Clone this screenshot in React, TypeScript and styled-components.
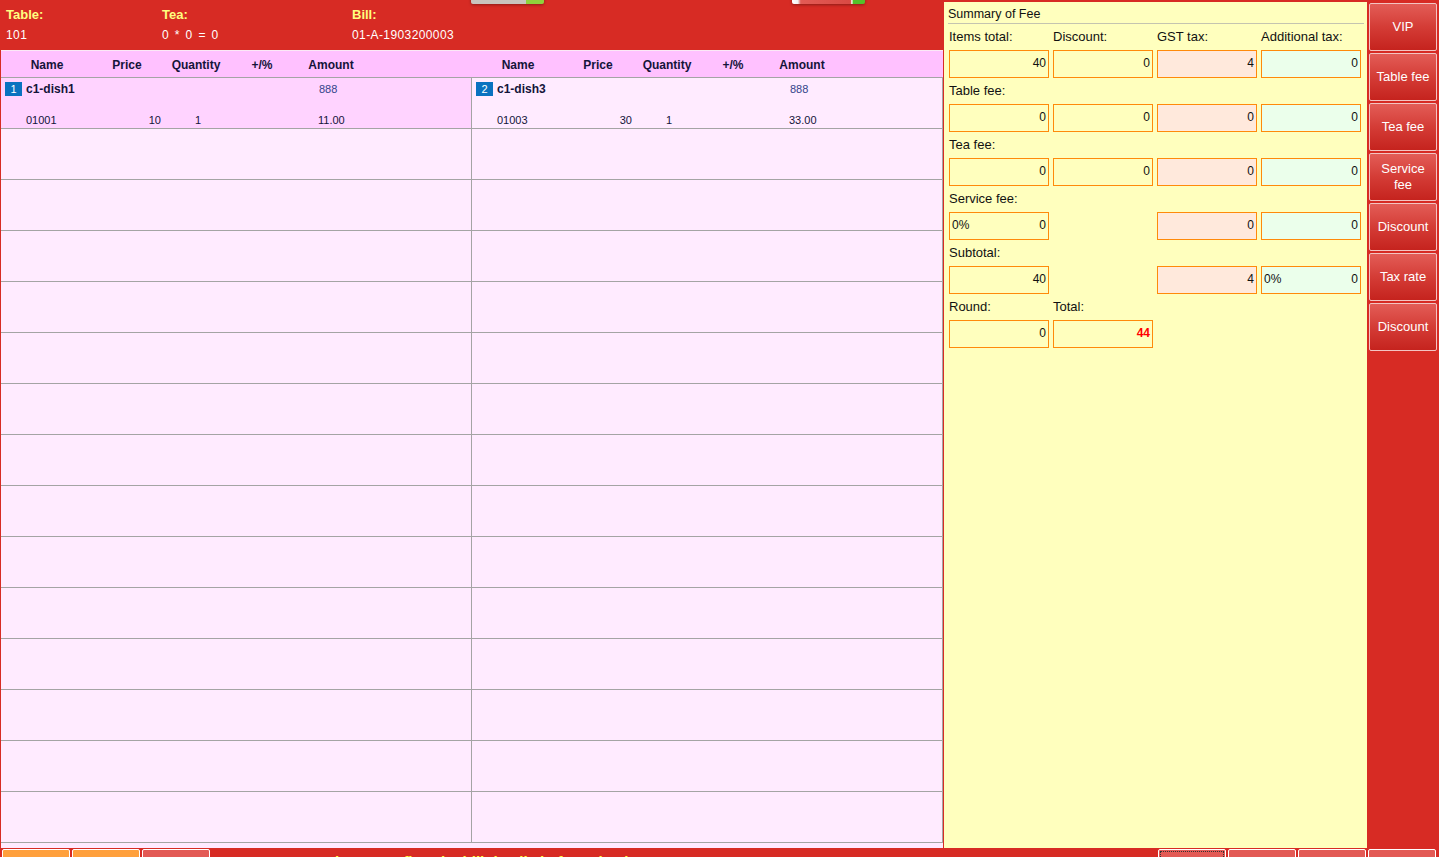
import React from "react";
import styled, { createGlobalStyle, css } from "styled-components";

const GlobalStyle = createGlobalStyle`
  html, body { margin: 0; padding: 0; background: #d72b24; }
  body { font-family: "Liberation Sans", Arial, sans-serif; }
  * { box-sizing: border-box; }
`;

const Page = styled.div`
  position: relative;
  width: 1439px;
  height: 857px;
  overflow: hidden;
  background: #d72b24;
  display: grid;
  grid-template-columns: 943px 424px 72px;
  grid-template-rows: 848px 9px;
`;

const LeftArea = styled.div`
  display: flex;
  flex-direction: column;
  min-height: 0;
`;

const InfoBar = styled.div`
  height: 50px;
  display: grid;
  grid-template-columns: 156px 190px 1fr;
  padding: 7px 0 0 6px;
`;

const InfoItem = styled.div`
  display: flex;
  flex-direction: column;
  gap: 6px;
`;

const InfoLabel = styled.div`
  color: #ffff80;
  font-weight: bold;
  font-size: 13px;
  line-height: 15px;
`;

const InfoValue = styled.div`
  color: #ffffff;
  font-size: 12px;
  line-height: 15px;
  letter-spacing: 0.4px;
  word-spacing: 2px;
`;

const Thumb = styled.div<{ $left: number; $tone: "grey" | "red" }>`
  position: absolute;
  top: -38px;
  left: ${(p) => p.$left}px;
  width: 73px;
  height: 42px;
  border-radius: 2px;
  box-shadow: 0 1px 3px rgba(0, 0, 0, 0.35);
  ${(p) =>
    p.$tone === "grey"
      ? css`
          background: linear-gradient(90deg, #c9c4be 0%, #c9c4be 76%, #8fd23c 76%, #8fd23c 100%);
        `
      : css`
          background: linear-gradient(90deg, #ffffff 0%, #f2f2f2 8%, #e25b55 12%, #d94a44 80%, #ffffff 82%, #54c02a 84%, #54c02a 100%);
        `}
`;

const OrderGrid = styled.div`
  flex: 1;
  margin-left: 1px;
  width: 942px;
  border-top: 1px solid #fbe8f6;
  background: #ffeaff;
  display: flex;
  flex-direction: column;
`;

const HeaderRow = styled.div`
  height: 27px;
  display: flex;
  background: #ffc1ff;
  border-bottom: 1px solid #a4a4a4;
  padding-top: 2px;
`;

const HeaderHalf = styled.div`
  width: 471px;
  display: flex;
  align-items: center;
`;

const HeaderCell = styled.div<{ $w: number }>`
  width: ${(p) => p.$w}px;
  text-align: center;
  font-size: 12px;
  font-weight: bold;
  color: #14143a;
`;

const Body = styled.div`
  display: grid;
  grid-template-columns: 471px 471px;
`;

const Cell = styled.div<{ $selected?: boolean }>`
  height: 51px;
  background: ${(p) => (p.$selected ? "#ffd3ff" : "#ffebff")};
  border-bottom: 1px solid #a4a4a4;
  border-right: 1px solid #a4a4a4;
  display: flex;
  flex-direction: column;
  justify-content: space-between;
  padding: 3px 0 1px 0;
  color: #14143a;
`;

const LineTop = styled.div`
  display: grid;
  grid-template-columns: 25px 293px 1fr;
  align-items: center;
  height: 15px;
`;

const LineBottom = styled.div`
  display: grid;
  grid-template-columns: 25px 95px 40px 34px 123px 1fr;
  align-items: center;
  height: 15px;
  font-size: 11px;
`;

const Badge = styled.div`
  margin-left: 4px;
  width: 17px;
  height: 14px;
  background: #0a72c0;
  color: #ffffff;
  font-size: 11px;
  line-height: 14px;
  text-align: center;
`;

const DishName = styled.div`
  font-size: 12px;
  font-weight: bold;
`;

const Price888 = styled.div`
  font-size: 11px;
  color: #33448a;
`;

const NumRight = styled.div`
  text-align: right;
`;

const SummaryPanel = styled.div`
  margin: 2px 0 0 1px;
  background: #ffffbe;
  display: flex;
  flex-direction: column;
`;

const Title = styled.div`
  height: 22px;
  margin: 0 3px 0 4px;
  padding-top: 3px;
  border-bottom: 1px solid #c4c4b0;
  font-size: 12.5px;
  line-height: 18px;
  color: #111;
`;

const Form = styled.div`
  padding-left: 5px;
  display: flex;
  flex-direction: column;
`;

const LabelRow = styled.div`
  height: 26px;
  display: grid;
  grid-template-columns: repeat(4, 100px);
  column-gap: 4px;
  font-size: 13px;
  line-height: 26px;
  color: #111;
`;

const FieldRow = styled.div`
  height: 28px;
  display: grid;
  grid-template-columns: repeat(4, 100px);
  column-gap: 4px;
`;

type Tone = "yellow" | "peach" | "mint";

const Field = styled.div<{ $tone: Tone }>`
  height: 28px;
  border: 1px solid #ff8a0a;
  background: ${(p) =>
    p.$tone === "peach" ? "#ffe9dc" : p.$tone === "mint" ? "#ebffeb" : "#ffffbe"};
  display: flex;
  align-items: center;
  justify-content: space-between;
  padding: 0 2px 3px 2px;
  font-size: 12px;
  color: #111;
`;

const FieldValue = styled.span<{ $total?: boolean }>`
  margin-left: auto;
  ${(p) =>
    p.$total &&
    css`
      color: #ff0000;
      font-weight: bold;
    `}
`;

const SideBar = styled.div`
  display: flex;
  flex-direction: column;
  gap: 2px;
  padding: 3px 3px 0 2px;
`;

const SideButton = styled.button`
  height: 48px;
  width: 68px;
  border: 1px solid #f3c4c2;
  border-radius: 2px;
  background: linear-gradient(180deg, #e35d57 0%, #d43c36 50%, #c5231e 100%);
  color: #ffffff;
  font-family: "Liberation Sans", Arial, sans-serif;
  font-size: 13px;
  line-height: 16px;
  padding: 0 3px;
  cursor: pointer;
`;

const Footer = styled.div`
  grid-column: 1 / -1;
  display: flex;
  align-items: flex-start;
  padding: 1px 3px 0 2px;
  gap: 2px;
  overflow: hidden;
`;

const FootButton = styled.div<{ $orange?: boolean; $focus?: boolean }>`
  width: 68px;
  height: 40px;
  flex: none;
  border: 1px solid #ffffff;
  border-radius: 2px;
  background: ${(p) => (p.$orange ? "#ffa03c" : "#e35a55")};
  ${(p) =>
    p.$focus &&
    css`
      outline: 1px dotted #333;
      outline-offset: -3px;
    `}
`;

const FootMessage = styled.div`
  margin-left: 113px;
  flex: 1;
  padding-top: 4px;
  color: #ffff40;
  font-weight: bold;
  font-size: 15px;
  line-height: 18px;
  white-space: nowrap;
`;

type Dish = { no: number; name: string; code: string; price: string; qty: string; amount: string };

const leftDish: Dish = { no: 1, name: "c1-dish1", code: "01001", price: "10", qty: "1", amount: "11.00" };
const rightDish: Dish = { no: 2, name: "c1-dish3", code: "01003", price: "30", qty: "1", amount: "33.00" };

const headerCols: [string, number][] = [
  ["Name", 92],
  ["Price", 68],
  ["Quantity", 70],
  ["+/%", 62],
  ["Amount", 76],
];

const OrderHeader = () => (
  <HeaderHalf>
    {headerCols.map(([t, w]) => (
      <HeaderCell key={t} $w={w}>
        {t}
      </HeaderCell>
    ))}
  </HeaderHalf>
);

const DishCell = ({ dish, selected }: { dish: Dish; selected?: boolean }) => (
  <Cell $selected={selected}>
    <LineTop>
      <Badge>{dish.no}</Badge>
      <DishName>{dish.name}</DishName>
      <Price888>888</Price888>
    </LineTop>
    <LineBottom>
      <span />
      <span>{dish.code}</span>
      <NumRight>{dish.price}</NumRight>
      <span />
      <span>{dish.qty}</span>
      <span>{dish.amount}</span>
    </LineBottom>
  </Cell>
);

type F = { tone: Tone; value?: string; prefix?: string; total?: boolean } | null;

const rows: { labels: string[]; fields: F[] }[] = [
  {
    labels: ["Items total:", "Discount:", "GST tax:", "Additional tax:"],
    fields: [
      { tone: "yellow", value: "40" },
      { tone: "yellow", value: "0" },
      { tone: "peach", value: "4" },
      { tone: "mint", value: "0" },
    ],
  },
  {
    labels: ["Table fee:"],
    fields: [
      { tone: "yellow", value: "0" },
      { tone: "yellow", value: "0" },
      { tone: "peach", value: "0" },
      { tone: "mint", value: "0" },
    ],
  },
  {
    labels: ["Tea fee:"],
    fields: [
      { tone: "yellow", value: "0" },
      { tone: "yellow", value: "0" },
      { tone: "peach", value: "0" },
      { tone: "mint", value: "0" },
    ],
  },
  {
    labels: ["Service fee:"],
    fields: [
      { tone: "yellow", value: "0", prefix: "0%" },
      null,
      { tone: "peach", value: "0" },
      { tone: "mint", value: "0" },
    ],
  },
  {
    labels: ["Subtotal:"],
    fields: [
      { tone: "yellow", value: "40" },
      null,
      { tone: "peach", value: "4" },
      { tone: "mint", value: "0", prefix: "0%" },
    ],
  },
  {
    labels: ["Round:", "Total:"],
    fields: [
      { tone: "yellow", value: "0" },
      { tone: "yellow", value: "44", total: true },
      null,
      null,
    ],
  },
];

const sideButtons = ["VIP", "Table fee", "Tea fee", "Service fee", "Discount", "Tax rate", "Discount"];

export default function App() {
  return (
    <>
      <GlobalStyle />
      <Page>
        <LeftArea>
          <InfoBar>
            <InfoItem>
              <InfoLabel>Table:</InfoLabel>
              <InfoValue>101</InfoValue>
            </InfoItem>
            <InfoItem>
              <InfoLabel>Tea:</InfoLabel>
              <InfoValue>0 * 0 = 0</InfoValue>
            </InfoItem>
            <InfoItem>
              <InfoLabel>Bill:</InfoLabel>
              <InfoValue>01-A-1903200003</InfoValue>
            </InfoItem>
          </InfoBar>
          <OrderGrid>
            <HeaderRow>
              <OrderHeader />
              <OrderHeader />
            </HeaderRow>
            <Body>
              {Array.from({ length: 15 }).map((_, i) => (
                <React.Fragment key={i}>
                  {i === 0 ? <DishCell dish={leftDish} selected /> : <Cell />}
                  {i === 0 ? <DishCell dish={rightDish} /> : <Cell />}
                </React.Fragment>
              ))}
            </Body>
          </OrderGrid>
        </LeftArea>

        <SummaryPanel>
          <Title>Summary of Fee</Title>
          <Form>
            {rows.map((r, i) => (
              <React.Fragment key={i}>
                <LabelRow>
                  {r.labels.map((l) => (
                    <span key={l}>{l}</span>
                  ))}
                </LabelRow>
                <FieldRow>
                  {r.fields.map((f, j) =>
                    f ? (
                      <Field key={j} $tone={f.tone}>
                        {f.prefix && <span>{f.prefix}</span>}
                        <FieldValue $total={f.total}>{f.value}</FieldValue>
                      </Field>
                    ) : (
                      <span key={j} />
                    )
                  )}
                </FieldRow>
              </React.Fragment>
            ))}
          </Form>
        </SummaryPanel>

        <SideBar>
          {sideButtons.map((b, i) => (
            <SideButton key={i}>{b}</SideButton>
          ))}
        </SideBar>

        <Footer>
          <FootButton $orange />
          <FootButton $orange />
          <FootButton />
          <FootMessage>Please confirm the bill details before checkout</FootMessage>
          <FootButton $focus />
          <FootButton />
          <FootButton />
          <FootButton />
        </Footer>

        <Thumb $left={471} $tone="grey" />
        <Thumb $left={792} $tone="red" />
      </Page>
    </>
  );
}
